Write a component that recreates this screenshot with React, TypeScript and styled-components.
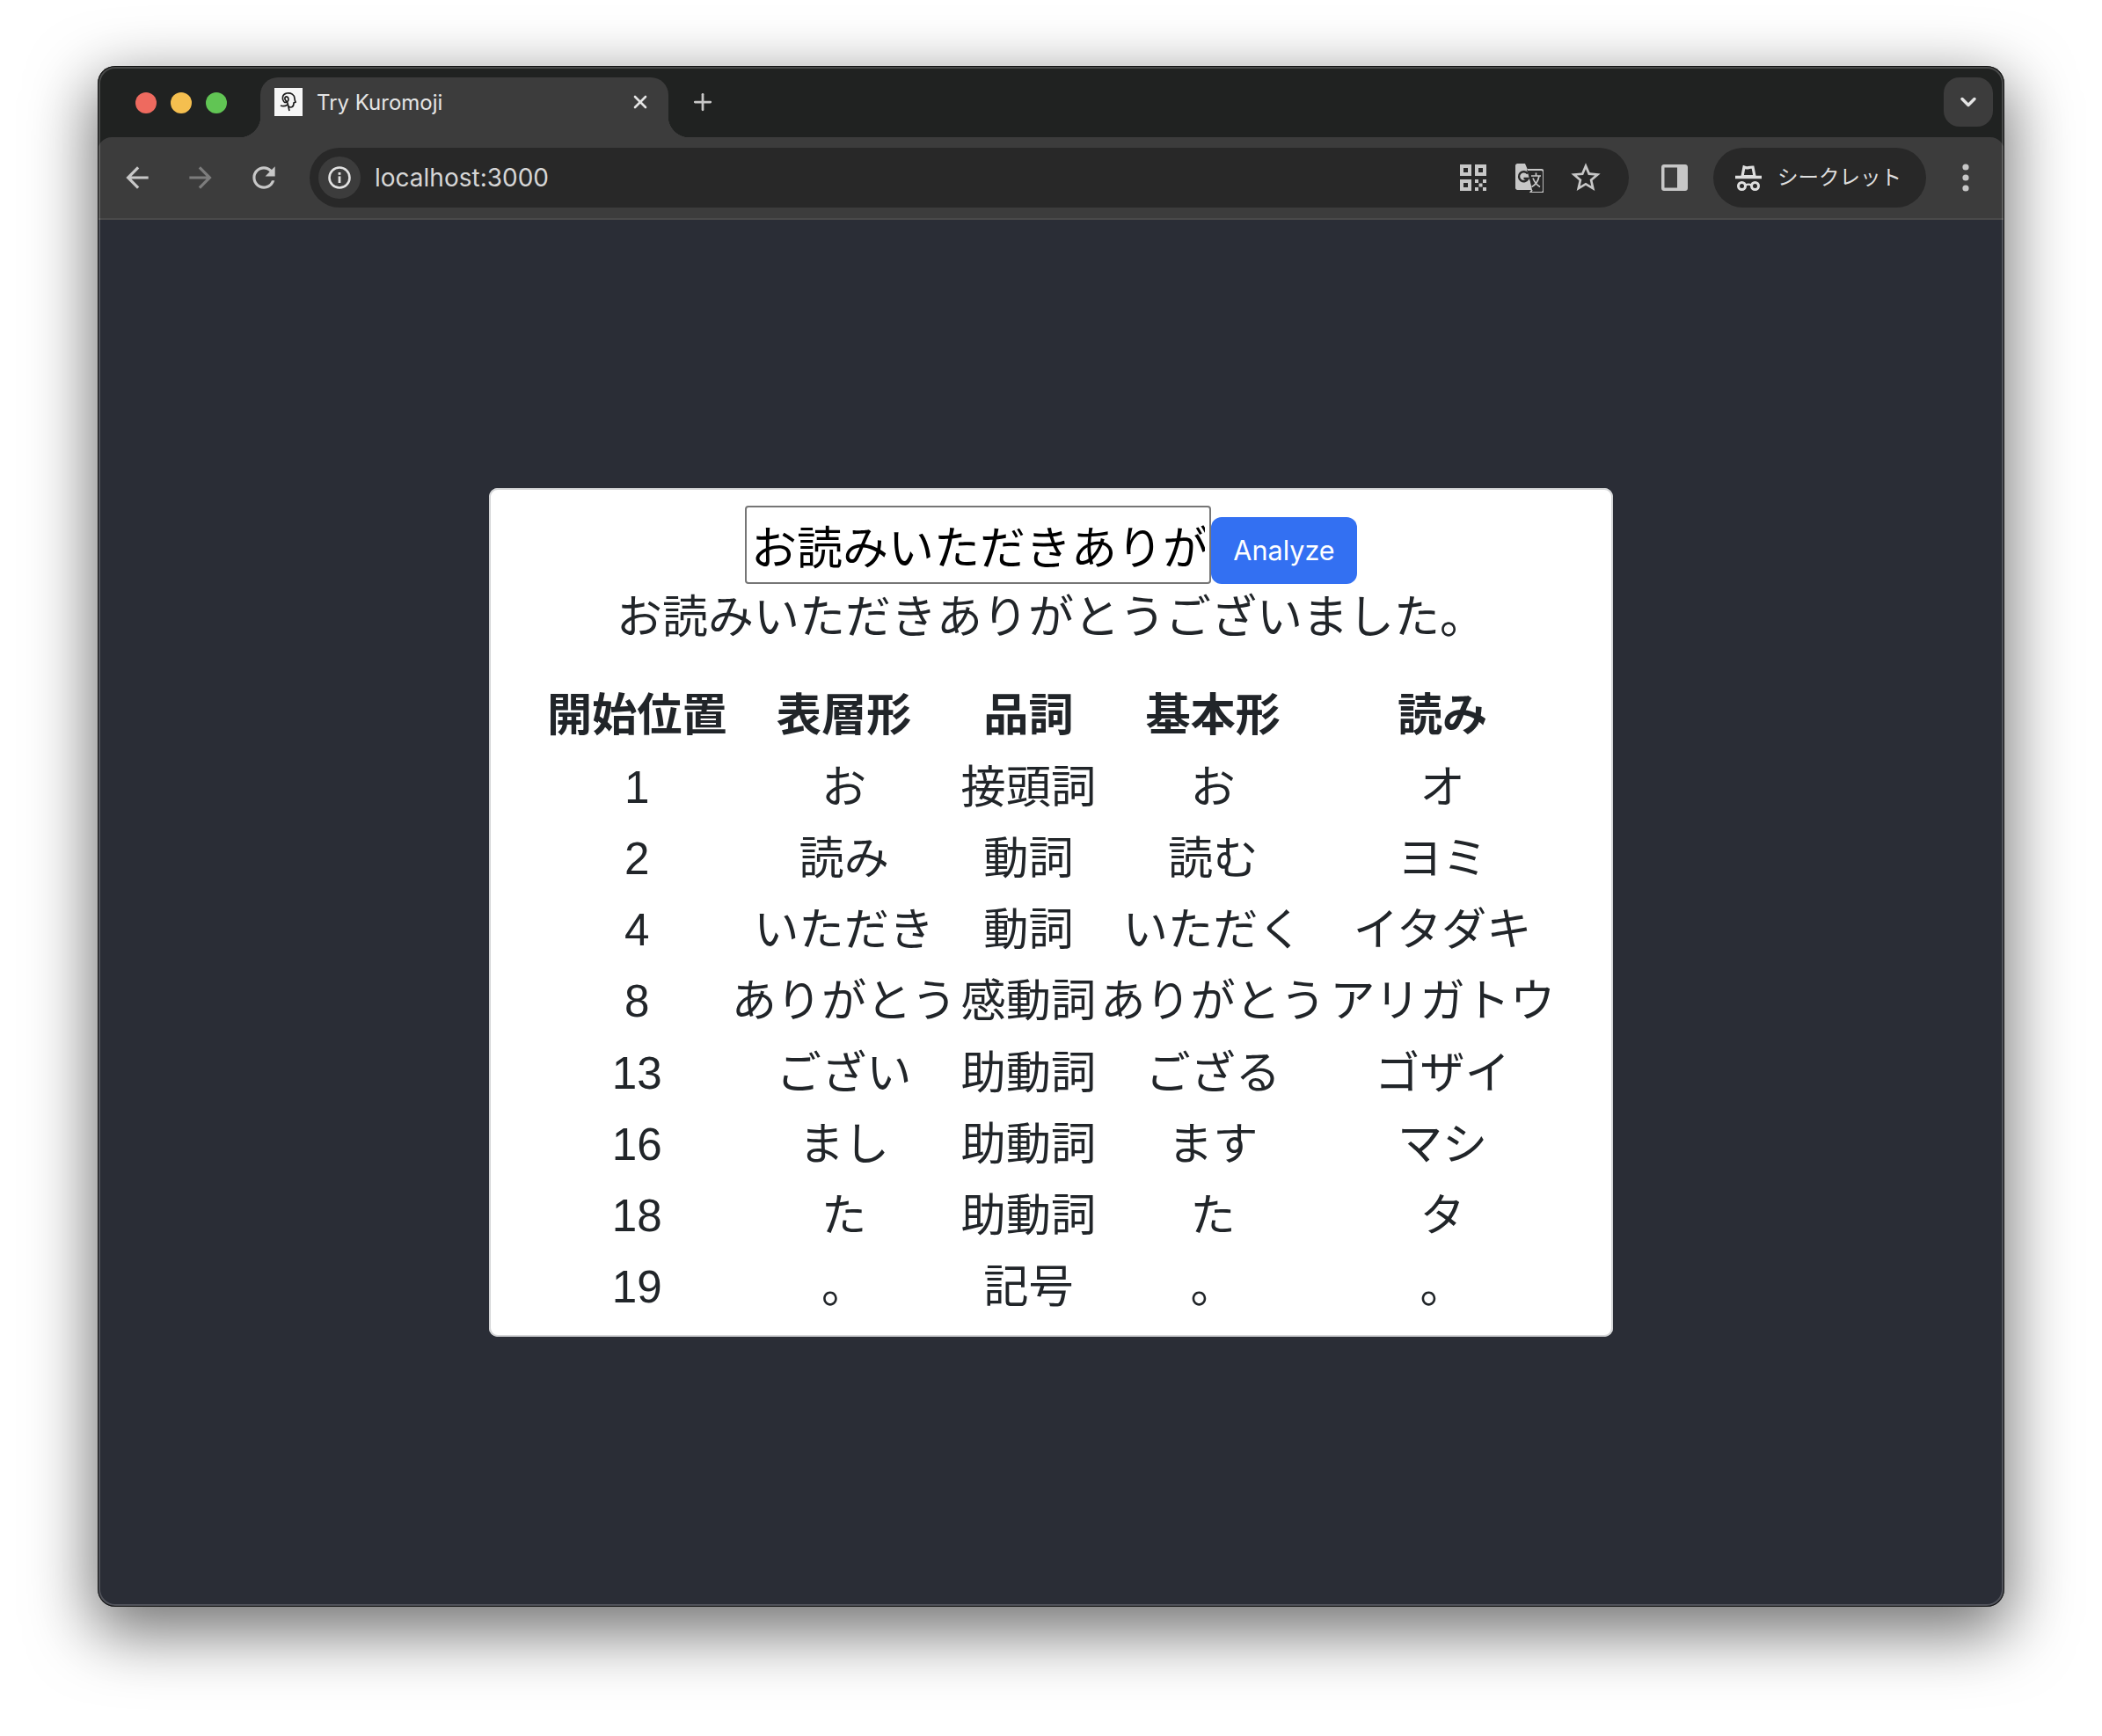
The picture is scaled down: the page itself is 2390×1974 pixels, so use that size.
import React from "react"
import styled, { createGlobalStyle } from "styled-components"
import { ChevronDown, Plus, X } from "lucide-react"

const GlobalStyle = createGlobalStyle`
  html, body {
    margin: 0;
    padding: 0;
    background: #ffffff;
  }
`

const Stage = styled.div`
  width: 2390px;
  height: 1974px;
  box-sizing: border-box;
  padding: 75px 111px 147px;
  overflow: hidden;
  font-family: Inter, "Noto Sans CJK JP", sans-serif;
`

const WindowShadow = styled.div`
  height: 100%;
  border-radius: 20px;
  box-shadow: 0 24px 72px 6px rgba(0, 0, 0, 0.55);
`

const Window = styled.div`
  position: relative;
  height: 100%;
  display: flex;
  flex-direction: column;
  border-radius: 20px;
  overflow: hidden;
  background: #202221;

  &::after {
    content: "";
    position: absolute;
    inset: 0;
    border-radius: 20px;
    box-shadow: inset 0 0 0 1px #111111, inset 0 0 0 3px rgba(255, 255, 255, 0.18);
    pointer-events: none;
  }
`

const TitleBar = styled.div`
  flex: none;
  height: 81px;
  display: flex;
  align-items: flex-end;
  background: #202221;
  padding-left: 43px;
`

const Lights = styled.div`
  align-self: flex-start;
  margin-top: 30px;
  width: 142px;
  display: flex;
  gap: 16px;
`

const Light = styled.span<{ $color: string }>`
  width: 24px;
  height: 24px;
  border-radius: 50%;
  background: ${(p) => p.$color};
`

const Tab = styled.div`
  position: relative;
  width: 464px;
  height: 68px;
  box-sizing: border-box;
  padding: 0 20px 12px 16px;
  display: flex;
  align-items: center;
  gap: 16px;
  background: #3c3c3c;
  border-radius: 20px 20px 0 0;
  color: #e4e4e4;
  font-size: 24px;

  &::before,
  &::after {
    content: "";
    position: absolute;
    bottom: 0;
    width: 24px;
    height: 24px;
  }
  &::before {
    left: -24px;
    background: radial-gradient(circle at 0 0, transparent 24px, #3c3c3c 24.5px);
  }
  &::after {
    right: -24px;
    background: radial-gradient(circle at 100% 0, transparent 24px, #3c3c3c 24.5px);
  }
`

const Favicon = styled.span`
  flex: none;
  width: 32px;
  height: 32px;
  background: #f6f6f6;
  display: flex;
  align-items: center;
  justify-content: center;
`

const TabTitle = styled.span`
  flex: 1;
`

const NewTab = styled.span`
  align-self: flex-start;
  margin: 26px 0 0 24px;
  display: flex;
  color: #c8c8c8;
`

const TabMenu = styled.span`
  align-self: flex-start;
  margin: 13px 13px 0 auto;
  width: 56px;
  height: 56px;
  border-radius: 18px;
  background: #3c3c3c;
  display: flex;
  align-items: center;
  justify-content: center;
  color: #e4e4e4;
`

const Toolbar = styled.div`
  flex: none;
  height: 94px;
  display: flex;
  align-items: center;
  box-sizing: border-box;
  padding: 0 0 0 9px;
  background: #3c3c3c;
  border-radius: 16px 16px 0 0;
  border-bottom: 2px solid #4a4a4a;
`

const NavButton = styled.span<{ $dim?: boolean }>`
  flex: none;
  width: 72px;
  display: flex;
  justify-content: center;
  color: ${(p) => (p.$dim ? "#7c7c7c" : "#c7c7c7")};
`

const AddressBar = styled.div`
  flex: none;
  margin-left: 16px;
  width: 1500px;
  height: 68px;
  box-sizing: border-box;
  padding: 0 17px 0 10px;
  border-radius: 34px;
  background: #282828;
  display: flex;
  align-items: center;
  color: #c7c7c7;
`

const InfoChip = styled.span`
  flex: none;
  width: 48px;
  height: 48px;
  border-radius: 50%;
  background: #3c3c3c;
  display: flex;
  align-items: center;
  justify-content: center;
  color: #e2e2e2;
`

const Url = styled.span`
  flex: 1;
  margin-left: 16px;
  font-size: 28px;
  color: #d6d6d6;
`

const AddressIcon = styled.span`
  flex: none;
  width: 64px;
  display: flex;
  justify-content: center;
`

const PanelButton = styled.span`
  flex: none;
  margin-left: 20px;
  width: 64px;
  display: flex;
  justify-content: center;
  color: #c7c7c7;
`

const IncognitoPill = styled.div`
  flex: none;
  margin-left: 12px;
  width: 242px;
  height: 68px;
  box-sizing: border-box;
  padding-left: 25px;
  border-radius: 34px;
  background: #282828;
  display: flex;
  align-items: center;
  gap: 18px;
  color: #dedede;
`

const IncognitoLabel = styled.span`
  margin-top: -3px;
  font-family: "Noto Sans CJK JP", sans-serif;
  font-size: 23.5px;
  line-height: 1;
`

const MenuDots = styled.span`
  flex: none;
  margin-left: 21px;
  width: 48px;
  display: flex;
  justify-content: center;
  color: #c7c7c7;
`

const Content = styled.main`
  flex: 1;
  min-height: 0;
  background: #2a2d36;
  display: flex;
  align-items: center;
  justify-content: center;
`

const Card = styled.div`
  width: 1278px;
  box-sizing: border-box;
  margin-bottom: 2px;
  padding: 20px 16px 14px;
  border-radius: 10px;
  background: #ffffff;
  box-shadow: inset 0 0 0 2px #d4d5d7;
  display: flex;
  flex-direction: column;
  align-items: center;
  color: #212529;
  font-family: "Liberation Sans", "Noto Sans CJK JP", sans-serif;
  font-size: 51.2px;
  line-height: 76.8px;
`

const Form = styled.form`
  display: flex;
  align-items: flex-end;
  height: 89px;
`

const Input = styled.input`
  width: 530px;
  height: 89px;
  box-sizing: border-box;
  padding: 0 5px;
  border: 2px solid #767676;
  border-radius: 4px;
  font-family: "Noto Sans CJK JP", sans-serif;
  font-size: 52px;
  color: #000000;
  background: #ffffff;
  outline: none;
`

const Button = styled.button`
  width: 166px;
  height: 76px;
  padding: 0;
  border: none;
  border-radius: 12px;
  background: #3370f2;
  color: #ffffff;
  font-family: Inter, sans-serif;
  font-size: 30.6px;
  line-height: 48px;
`

const Sentence = styled.p`
  margin: 0 0 31px;
  font-size: 52px;
`

const Table = styled.table`
  border-collapse: separate;
  border-spacing: 5px 4px;
  line-height: 77.2px;
`

const HeadCell = styled.th`
  padding: 0;
  font-weight: 700;
  text-align: center;
  white-space: nowrap;
`

const Cell = styled.td`
  padding: 0;
  text-align: center;
  white-space: nowrap;
`

const rows = [
  ["1", "お", "接頭詞", "お", "オ"],
  ["2", "読み", "動詞", "読む", "ヨミ"],
  ["4", "いただき", "動詞", "いただく", "イタダキ"],
  ["8", "ありがとう", "感動詞", "ありがとう", "アリガトウ"],
  ["13", "ござい", "助動詞", "ござる", "ゴザイ"],
  ["16", "まし", "助動詞", "ます", "マシ"],
  ["18", "た", "助動詞", "た", "タ"],
  ["19", "。", "記号", "。", "。"],
]

const headers = ["開始位置", "表層形", "品詞", "基本形", "読み"]

function BackIcon() {
  return (
    <svg width="38" height="38" viewBox="0 0 24 24" fill="currentColor">
      <path d="M20 11H7.83l5.59-5.59L12 4l-8 8 8 8 1.41-1.41L7.83 13H20v-2z" />
    </svg>
  )
}

function ForwardIcon() {
  return (
    <svg width="38" height="38" viewBox="0 0 24 24" fill="currentColor">
      <path d="M4 11h12.17l-5.59-5.59L12 4l8 8-8 8-1.41-1.41L16.17 13H4v-2z" />
    </svg>
  )
}

function ReloadIcon() {
  return (
    <svg width="38" height="38" viewBox="0 0 24 24" fill="currentColor">
      <path d="M17.65 6.35C16.2 4.9 14.21 4 12 4c-4.42 0-7.99 3.58-7.99 8s3.57 8 7.99 8c3.73 0 6.84-2.55 7.73-6h-2.08c-.82 2.33-3.04 4-5.65 4-3.31 0-6-2.69-6-6s2.69-6 6-6c1.66 0 3.14.69 4.22 1.78L13 11h7V4l-2.35 2.35z" />
    </svg>
  )
}

function StarIcon() {
  return (
    <svg width="40" height="40" viewBox="0 0 24 24" fill="#c7c7c7">
      <path d="M22 9.24l-7.19-.62L12 2 9.19 8.63 2 9.24l5.46 4.73L5.82 21 12 17.27 18.18 21l-1.63-7.03L22 9.24zM12 15.4l-3.76 2.27 1-4.28-3.32-2.88 4.38-.38L12 6.1l1.71 4.04 4.38.38-3.32 2.88 1 4.28L12 15.4z" />
    </svg>
  )
}

function InfoIcon() {
  return (
    <svg width="32" height="32" viewBox="0 0 32 32" fill="none" stroke="currentColor">
      <circle cx="16" cy="16" r="11.5" strokeWidth="2.6" />
      <rect x="14.6" y="14.4" width="2.8" height="7.6" fill="currentColor" stroke="none" />
      <rect x="14.6" y="10" width="2.8" height="2.8" fill="currentColor" stroke="none" />
    </svg>
  )
}

function QrIcon() {
  return (
    <svg width="30" height="30" viewBox="0 0 30 30" fill="#c7c7c7">
      <path fillRule="evenodd" d="M0 0h13v13H0zM4 4v5h5V4zM17 0h13v13H17zM21 4v5h5V4zM0 17h13v13H0zM4 21v5h5v-5z" />
      <path d="M17 17h4v4h-4zM26 17h4v4h-4zM21.5 21.5h4v4h-4zM17 26h4v4h-4zM26 26h4v4h-4z" />
    </svg>
  )
}

function TranslateIcon() {
  return (
    <svg width="32" height="33" viewBox="0 0 32 33">
      <path d="M2.5 0H11l3 7h-1l7 23H2.5C1 30 0 29 0 27.5v-25C0 1 1 0 2.5 0z" fill="#c7c7c7" />
      <path d="M14 7h15.5C31 7 32 8 32 9.5v21c0 1.5-1 2.5-2.5 2.5H17l2-3" fill="#282828" stroke="#c7c7c7" strokeWidth="1.8" />
      <path d="M14 11.5A5.5 5.5 0 1 0 14.5 17H9.5" fill="none" stroke="#282828" strokeWidth="2.4" />
      <path d="M18 14h11M23.5 10.5V14M27 14c-1 5.5-4.5 10.5-8.5 12.5M20 16.5c1.5 4 4.5 8 8 10" fill="none" stroke="#c7c7c7" strokeWidth="1.7" />
    </svg>
  )
}

function PanelIcon() {
  return (
    <svg width="30" height="30" viewBox="0 0 30 30">
      <path
        fillRule="evenodd"
        d="M3 0h24c1.7 0 3 1.3 3 3v24c0 1.7-1.3 3-3 3H3c-1.7 0-3-1.3-3-3V3c0-1.7 1.3-3 3-3zM3.5 3.5v23H18v-23z"
        fill="#c7c7c7"
      />
    </svg>
  )
}

function IncognitoIcon() {
  return (
    <svg width="30" height="29" viewBox="0 0 30 29" fill="none" stroke="currentColor">
      <path d="M8 12.5L10 2c2.5 1.2 3 1.2 5 .6s2.5-.6 5-.6l2 10.5z" strokeWidth="3.2" />
      <path d="M0 13.5h30" strokeWidth="3.4" />
      <circle cx="7.5" cy="23.5" r="4" strokeWidth="3" />
      <circle cx="22.5" cy="23.5" r="4" strokeWidth="3" />
      <path d="M11.5 22.5c2.3-1.2 4.7-1.2 7 0" strokeWidth="2.4" />
    </svg>
  )
}

function DotsIcon() {
  return (
    <svg width="8" height="32" viewBox="0 0 8 32" fill="currentColor">
      <circle cx="4" cy="4" r="3.6" />
      <circle cx="4" cy="16" r="3.6" />
      <circle cx="4" cy="28" r="3.6" />
    </svg>
  )
}

function FaviconGlyph() {
  return (
    <svg width="22" height="26" viewBox="0 0 22 26" fill="none" stroke="#1c1c1c" strokeWidth="1.7">
      <path d="M6 13C3 9 4 4 9 3c5-1 9 2 9 6 0 2 .5 3 1 4l-2 1c0 3-1 5-4 5l-2-1" />
      <path d="M6 13c2 1 5 0 5-3s-3-4-4-2 1 3 3 6l2 9" />
      <path d="M2 17c2 1 5 1 8-1" />
    </svg>
  )
}

export default function App() {
  return (
    <>
      <GlobalStyle />
      <Stage>
        <WindowShadow>
          <Window>
            <TitleBar>
              <Lights>
                <Light $color="#ee6a5f" />
                <Light $color="#f5bf4f" />
                <Light $color="#61c554" />
              </Lights>
              <Tab>
                <Favicon>
                  <FaviconGlyph />
                </Favicon>
                <TabTitle>Try Kuromoji</TabTitle>
                <X size={24} strokeWidth={2.6} color="#e4e4e4" />
              </Tab>
              <NewTab>
                <Plus size={30} strokeWidth={2.2} />
              </NewTab>
              <TabMenu>
                <ChevronDown size={28} strokeWidth={3} />
              </TabMenu>
            </TitleBar>
            <Toolbar>
              <NavButton>
                <BackIcon />
              </NavButton>
              <NavButton $dim>
                <ForwardIcon />
              </NavButton>
              <NavButton>
                <ReloadIcon />
              </NavButton>
              <AddressBar>
                <InfoChip>
                  <InfoIcon />
                </InfoChip>
                <Url>localhost:3000</Url>
                <AddressIcon>
                  <QrIcon />
                </AddressIcon>
                <AddressIcon>
                  <TranslateIcon />
                </AddressIcon>
                <AddressIcon>
                  <StarIcon />
                </AddressIcon>
              </AddressBar>
              <PanelButton>
                <PanelIcon />
              </PanelButton>
              <IncognitoPill>
                <IncognitoIcon />
                <IncognitoLabel>シークレット</IncognitoLabel>
              </IncognitoPill>
              <MenuDots>
                <DotsIcon />
              </MenuDots>
            </Toolbar>
            <Content>
              <Card>
                <Form>
                  <Input readOnly value="お読みいただきありがとうございました。" />
                  <Button type="button">Analyze</Button>
                </Form>
                <Sentence>お読みいただきありがとうございました。</Sentence>
                <Table>
                  <thead>
                    <tr>
                      {headers.map((h) => (
                        <HeadCell key={h}>{h}</HeadCell>
                      ))}
                    </tr>
                  </thead>
                  <tbody>
                    {rows.map((row) => (
                      <tr key={row[0]}>
                        {row.map((c, i) => (
                          <Cell key={i}>{c}</Cell>
                        ))}
                      </tr>
                    ))}
                  </tbody>
                </Table>
              </Card>
            </Content>
          </Window>
        </WindowShadow>
      </Stage>
    </>
  )
}
